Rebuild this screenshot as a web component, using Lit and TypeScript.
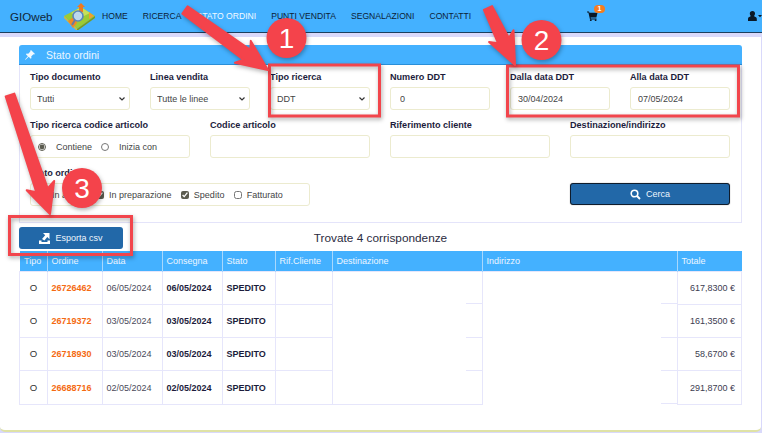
import { LitElement, html, css, svg } from "lit";
import { customElement } from "lit/decorators.js";

type Pt = [number, number];
function arrow(t: Pt, p: Pt, headLen: number, headHalf: number, tailHalf: number, shaftHalf: number) {
  const dx = p[0] - t[0], dy = p[1] - t[1];
  const len = Math.hypot(dx, dy);
  const ux = dx / len, uy = dy / len, nx = -uy, ny = ux;
  const bx = p[0] - ux * headLen, by = p[1] - uy * headLen;
  const pts: Pt[] = [
    [t[0] + nx * tailHalf, t[1] + ny * tailHalf],
    [bx + nx * shaftHalf + ux * 3, by + ny * shaftHalf + uy * 3],
    [bx + nx * headHalf - ux * 2, by + ny * headHalf - uy * 2],
    p,
    [bx - nx * headHalf - ux * 2, by - ny * headHalf - uy * 2],
    [bx - nx * shaftHalf + ux * 3, by - ny * shaftHalf + uy * 3],
    [t[0] - nx * tailHalf, t[1] - ny * tailHalf],
  ];
  return pts.map((q) => q.map((v) => v.toFixed(1)).join(",")).join(" ");
}

const NAV = ["HOME", "RICERCA", "STATO ORDINI", "PUNTI VENDITA", "SEGNALAZIONI", "CONTATTI"];
const COLS = [28, 55, 60, 60, 53, 57, 150, 195, 64];
const ROWS = [
  { o: "26726462", d: "06/05/2024", c: "06/05/2024", t: "617,8300 €" },
  { o: "26719372", d: "03/05/2024", c: "03/05/2024", t: "161,3500 €" },
  { o: "26718930", d: "03/05/2024", c: "03/05/2024", t: "58,6700 €" },
  { o: "26688716", d: "02/05/2024", c: "02/05/2024", t: "291,8700 €" },
];
const HEADS = ["Tipo", "Ordine", "Data", "Consegna", "Stato", "Rif.Cliente", "Destinazione", "Indirizzo", "Totale"];

@customElement("app-root")
export class AppRoot extends LitElement {
  static styles = css`
    :host { display: block; width: 762px; height: 433px; overflow: hidden; position: relative; background: #d9d9fb; font-family: "Liberation Sans", Arial, sans-serif; color: #1c1c3c; }
    .nav { height: 32px; background: #44b1ff; border-bottom: 1px solid #1c3f5e; display: flex; align-items: center; box-sizing: content-box; font-size: 8.6px; color: #0c2238; }
    .brand { font-size: 11.6px; margin-left: 10px; width: 53px; color: #10263a; }
    .logo { width: 34px; height: 28px; margin-right: 5px; display: block; }
    .links { display: flex; gap: 15px; }
    .active { color: #f2f9ff; }
    .cart { position: absolute; left: 587px; top: 11px; width: 11px; height: 10px; }
    .badge { position: absolute; left: 594px; top: 5px; width: 11px; height: 8px; border-radius: 4px; background: #f57c1f; color: #fff; font-size: 7px; font-weight: bold; line-height: 8px; text-align: center; }
    .user { position: absolute; left: 748px; top: 11px; width: 14px; height: 10px; }
    .card { margin: 4px 1px 0 0; height: 395px; box-sizing: border-box; background: #fff; border-bottom: 2px solid #dfe2a6; border-radius: 0 0 5px 5px; padding: 8px 19px 0; }
    .panel-head { height: 19px; background: #44b1ff; border-radius: 3px 3px 0 0; color: #eaf6ff; display: flex; align-items: center; font-size: 10.5px; border-bottom: 1px solid #2a8fd8; }
    .pin { width: 10px; height: 10px; margin: 0 11px 0 6px; }
    .panel-body { height: 158px; box-sizing: border-box; border: 1px solid #e4e4fa; border-top: 0; padding: 6px 10px 0; }
    .row { display: grid; column-gap: 20px; }
    .r1 { grid-template-columns: repeat(6, 100px); }
    .r2, .r3 { grid-template-columns: repeat(4, 160px); }
    .r2 { margin-top: 9px; }
    .r3 { margin-top: 9px; }
    .wide { grid-column: span 2; width: 280px; }
    .last { grid-column: 4; }
    label { display: block; font-size: 9.1px; font-weight: bold; line-height: 13px; margin-bottom: 3px; color: #1c1c3c; white-space: nowrap; }
    select, input.txt { display: block; box-sizing: border-box; width: 100%; height: 23px; border: 1px solid #ecebcf; border-radius: 3px; background: #fff; font: 9px "Liberation Sans", Arial, sans-serif; color: #444; padding: 0 7px; margin: 0; outline: none; }
    select { appearance: none; padding: 0 6px; background: #fff url("data:image/svg+xml,%3Csvg xmlns='http://www.w3.org/2000/svg' width='6' height='4'%3E%3Cpath d='M.5.5 3 3 5.500.5' fill='none' stroke='%23333' stroke-width='1.200'/%3E%3C/svg%3E") no-repeat right 4px center; }
    input.num { padding: 0 9px; }
    .opts { box-sizing: border-box; height: 23px; border: 1px solid #ecebcf; border-radius: 3px; display: flex; align-items: center; font-size: 9px; color: #444; padding-left: 8px; white-space: nowrap; }
    .opts input { margin: 0 5px 0 0; accent-color: #5c5c50; width: 8px; height: 8px; flex: none; }
    .opts span { margin-right: 9.4px; }
    .opts.radios { padding-left: 7px; }
    .opts.radios span { margin-right: 9px; }
    .opts.radios input { margin-right: 10px; }
    .btn { display: flex; align-items: center; justify-content: center; gap: 5px; background: #2268a8; color: #eef6fd; font-size: 9px; border-radius: 3px; box-sizing: border-box; border: 0; padding: 0; font-family: inherit; }
    .btn svg { width: 11px; height: 11px; display: block; }
    .search { height: 22px; width: 160px; margin-top: 16px; border: 1px solid #0f1c2c; box-shadow: 0 0 1px #666; }
    .bar { display: grid; grid-template-columns: 104px 1fr 104px; align-items: center; height: 22px; margin-top: 4px; }
    .export { height: 22px; }
    .title { font-size: 11.8px; text-align: center; color: #2a2a40; }
    table { margin-top: 2px; width: 722px; border-collapse: collapse; table-layout: fixed; font-size: 9px; }
    th { background: #44b1ff; color: #ecf6ff; font-weight: normal; text-align: left; height: 20px; padding: 0 0 0 3.500px; box-sizing: border-box; border-left: 1px solid #a8d8fd; white-space: nowrap; overflow: hidden; }
    th:first-child { border-left: 0; padding-left: 4.500px; }
    td { height: 33.3px; box-sizing: border-box; padding: 0 0 0 3.500px; border: 1px solid #e6e6fb; color: #4a4a5a; white-space: nowrap; }
    .center { text-align: center; padding: 0; color: #333; font-size: 9.600px; line-height: 12px; }
    .ord { color: #f56a12; font-weight: bold; }
    .bold { color: #1c1c3c; font-weight: bold; }
    .right { text-align: right; padding: 0 6px 0 0; color: #3c3c50; }
    .blank { border-bottom-color: transparent; background: linear-gradient(#e6e6fb, #e6e6fb) right bottom / 17px 1px no-repeat; background-origin: border-box; }
    .blank.end { border-bottom-color: #e6e6fb; background: none; }
    .overlay { position: absolute; left: 0; top: 0; width: 762px; height: 433px; pointer-events: none; }
    .box { fill: none; stroke: #f2454c; stroke-width: 3; filter: drop-shadow(1px 2px 2px rgba(0,0,0,0.35)); }
    .arr { fill: #f4434b; stroke: #f4434b; stroke-width: 2; stroke-linejoin: round; filter: drop-shadow(1px 2px 2px rgba(0,0,0,0.3)); }
    .dot { fill: #f4434b; filter: drop-shadow(1px 2px 2px rgba(0,0,0,0.3)); }
    .digit { fill: #fff; font: 28px "Liberation Sans", Arial, sans-serif; text-anchor: middle; }
  `;

  private logo() {
    return html`<svg class="logo" viewBox="0 0 34 28">
      <polygon points="1,14 18,5 32,14 14,27" fill="#9ccb35"/>
      <polygon points="1,14 14,27 14,29 1,16" fill="#d8b838"/>
      <polygon points="14,27 32,14 32,16 14,29" fill="#7a9c20"/>
      <polygon points="8,11 18,5 27,11 17,16" fill="#c7df5a"/>
      <polygon points="18,1 22,5 20,5 20,10 16,10 16,5 14,5" fill="#f07a20"/>
      <polygon points="5,19 12,14 14,21 10,26" fill="#f08a24"/>
      <polygon points="26,10 31,14 26,17" fill="#f0a030"/>
      <circle cx="15" cy="14" r="5" fill="#bcd8ee" stroke="#5a86b8" stroke-width="1.6"/>
      <line x1="12" y1="18" x2="9" y2="23" stroke="#6a7aa0" stroke-width="2"/>
    </svg>`;
  }

  render() {
    const a1 = arrow([185, 10], [268, 70], 29, 13.5, 4.5, 6);
    const a2 = arrow([488, 8], [515, 65], 30, 13.5, 4.5, 6);
    const a3 = arrow([10, 95], [50, 214], 28, 14.5, 4.5, 6);
    return html`
      <div class="nav">
        <div class="brand">GIOweb</div>
        ${this.logo()}
        <div class="links">${NAV.map((n, i) => html`<span class=${i === 2 ? "active" : ""}>${n}</span>`)}</div>
      </div>
      <svg class="cart" viewBox="0 0 11 10"><path d="M0 .5h2l.4 1.200h8.100L9.400 6.600H3.600l.2.9H9.500v1H3L1.400 1.500H0z" fill="#0a1826"/><circle cx="3.800" cy="9.200" r=".9" fill="#0a1826"/><circle cx="8.600" cy="9.200" r=".9" fill="#0a1826"/></svg>
      <div class="badge">1</div>
      <svg class="user" viewBox="0 0 14 10"><path d="M4.500 0c1.700 0 2.500 1.100 2.500 2.600 0 1.100-.5 2-1 2.500.3.700 2.800 1 2.800 2.600V10H0V7.700c0-1.600 2.500-1.900 2.800-2.600-.5-.5-1-1.400-1-2.500C1.800 1.100 2.800 0 4.500 0z" fill="#0a1826"/><path d="M10 4h4l-2 2.200z" fill="#0a1826"/></svg>

      <div class="card">
        <div class="panel-head">
          <svg class="pin" viewBox="0 0 10 10"><path d="M6 0l4 4-1 .6-.6-.3L6.200 6.500l.3 1.600-.8.700-2-2L.6 9.800 0 9.500l2.900-3.300-2-2 .7-.7 1.600.3L5.400 1.600 5.100 1z" fill="#f2f9ff"/></svg>
          Stato ordini
        </div>
        <div class="panel-body">
          <div class="row r1">
            <div><label>Tipo documento</label><select><option>Tutti</option></select></div>
            <div><label>Linea vendita</label><select><option>Tutte le linee</option></select></div>
            <div><label>Tipo ricerca</label><select><option>DDT</option></select></div>
            <div><label>Numero DDT</label><input class="txt num" .value=${"0"} /></div>
            <div><label>Dalla data DDT</label><input class="txt" .value=${"30/04/2024"} /></div>
            <div><label>Alla data DDT</label><input class="txt" .value=${"07/05/2024"} /></div>
          </div>
          <div class="row r2">
            <div>
              <label>Tipo ricerca codice articolo</label>
              <div class="opts radios">
                <input type="radio" name="m" checked /><span>Contiene</span>
                <input type="radio" name="m" /><span>Inizia con</span>
              </div>
            </div>
            <div><label>Codice articolo</label><input class="txt" /></div>
            <div><label>Riferimento cliente</label><input class="txt" /></div>
            <div><label>Destinazione/indirizzo</label><input class="txt" /></div>
          </div>
          <div class="row r3">
            <div class="wide">
              <label>Stato ordini</label>
              <div class="opts">
                <input type="checkbox" checked /><span>In attesa</span>
                <input type="checkbox" checked /><span>In preparazione</span>
                <input type="checkbox" checked /><span>Spedito</span>
                <input type="checkbox" /><span>Fatturato</span>
              </div>
            </div>
            <button class="btn search last">
              <svg viewBox="0 0 11 11"><circle cx="4.500" cy="4.500" r="3.300" fill="none" stroke="#fff" stroke-width="1.600"/><line x1="7" y1="7" x2="10" y2="10" stroke="#fff" stroke-width="2"/></svg>
              Cerca
            </button>
          </div>
        </div>
        <div class="bar">
          <button class="btn export">
            <svg viewBox="0 0 11 11"><path d="M0 7.500h2.500v1.500h6V7.500H11V11H0z" fill="#fff"/><path d="M4 0h6.500v6.200L8.300 4 5.400 7.600 3 6 6.200 2.200z" fill="#fff"/></svg>
            Esporta csv
          </button>
          <div class="title">Trovate 4 corrispondenze</div>
          <div></div>
        </div>
        <table>
          <colgroup>${COLS.map((w) => html`<col style="width:${w}px" />`)}</colgroup>
          <thead><tr>${HEADS.map((h) => html`<th>${h}</th>`)}</tr></thead>
          <tbody>
            ${ROWS.map((r, i) => html`<tr>
              <td class="center">O</td>
              <td class="ord">${r.o}</td>
              <td>${r.d}</td>
              <td class="bold">${r.c}</td>
              <td class="bold">SPEDITO</td>
              <td></td>
              <td class="blank ${i === 3 ? "end" : ""}"></td>
              <td class="blank"></td>
              <td class="right">${r.t}</td>
            </tr>`)}
          </tbody>
        </table>
      </div>

      <svg class="overlay" viewBox="0 0 762 433">
        ${svg`
          <rect class="box" x="269.500" y="65" width="110" height="51"/>
          <rect class="box" x="507.500" y="66" width="231" height="50"/>
          <rect class="box" x="9.500" y="216.500" width="122" height="38"/>
          <polygon class="arr" points=${a1}/>
          <polygon class="arr" points=${a2}/>
          <polygon class="arr" points=${a3}/>
          <circle class="dot" cx="286.500" cy="38" r="20"/>
          <circle class="dot" cx="541.500" cy="40" r="20"/>
          <circle class="dot" cx="82" cy="188" r="20"/>
          <text class="digit" x="286.500" y="48">1</text>
          <text class="digit" x="541.500" y="50">2</text>
          <text class="digit" x="82" y="198">3</text>
        `}
      </svg>
    `;
  }
}
